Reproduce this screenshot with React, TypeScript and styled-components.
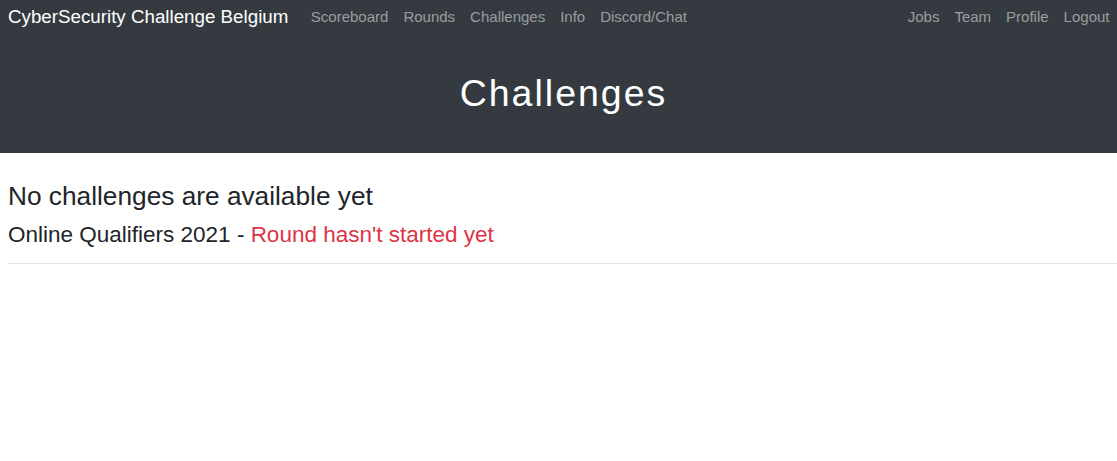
import React from 'react';
import styled, { createGlobalStyle } from 'styled-components';

const GlobalStyle = createGlobalStyle`
    html, body {
        margin: 0;
        padding: 0;
        background: #fff;
        font-family: "Liberation Sans", Arial, sans-serif;
        font-size: 15px;
        color: #212529;
    }
`;

const Header = styled.header`
    background: #343a40;
`;

const Navbar = styled.nav`
    display: flex;
    align-items: center;
    height: 33px;
    padding: 0 0 0 8px;
`;

const Brand = styled.a`
    color: #fff;
    font-size: 18.75px;
    margin-right: 15px;
    text-decoration: none;
    white-space: nowrap;
`;

const NavList = styled.ul<{ $right?: boolean }>`
    display: flex;
    list-style: none;
    margin: 0 0 0 ${(p) => (p.$right ? 'auto' : '0')};
    padding: 0;
`;

const NavLink = styled.a`
    display: block;
    padding: 0 7.5px;
    color: rgba(255, 255, 255, 0.5);
    font-size: 15px;
    text-decoration: none;
    white-space: nowrap;
`;

const Jumbotron = styled.div`
    height: 120px;
    padding-left: 10px;
    display: flex;
    align-items: center;
    justify-content: center;
`;

const Title = styled.h1`
    margin: 0;
    color: #fff;
    font-size: 37.5px;
    font-weight: 400;
    letter-spacing: 2px;
`;

const Content = styled.main`
    padding: 28px 0 0 8px;
`;

const Heading = styled.h3`
    margin: 0 0 8px;
    font-size: 26.25px;
    font-weight: 400;
    line-height: 1.2;
`;

const SubHeading = styled.h4`
    margin: 0;
    font-size: 22.5px;
    font-weight: 400;
    line-height: 1.2;
`;

const Danger = styled.span`
    color: #dc3545;
`;

const Divider = styled.hr`
    margin: 15px 0 0;
    border: 0;
    border-top: 1px solid rgba(0, 0, 0, 0.1);
`;

const leftLinks = ['Scoreboard', 'Rounds', 'Challenges', 'Info', 'Discord/Chat'];
const rightLinks = ['Jobs', 'Team', 'Profile', 'Logout'];

export default function App() {
    return (
        <>
            <GlobalStyle />
            <Header>
                <Navbar>
                    <Brand href="#">CyberSecurity Challenge Belgium</Brand>
                    <NavList>
                        {leftLinks.map((l) => (
                            <li key={l}><NavLink href="#">{l}</NavLink></li>
                        ))}
                    </NavList>
                    <NavList $right>
                        {rightLinks.map((l) => (
                            <li key={l}><NavLink href="#">{l}</NavLink></li>
                        ))}
                    </NavList>
                </Navbar>
                <Jumbotron>
                    <Title>Challenges</Title>
                </Jumbotron>
            </Header>
            <Content>
                <Heading>No challenges are available yet</Heading>
                <SubHeading>
                    Online Qualifiers 2021 - <Danger>Round hasn't started yet</Danger>
                </SubHeading>
                <Divider />
            </Content>
        </>
    );
}
